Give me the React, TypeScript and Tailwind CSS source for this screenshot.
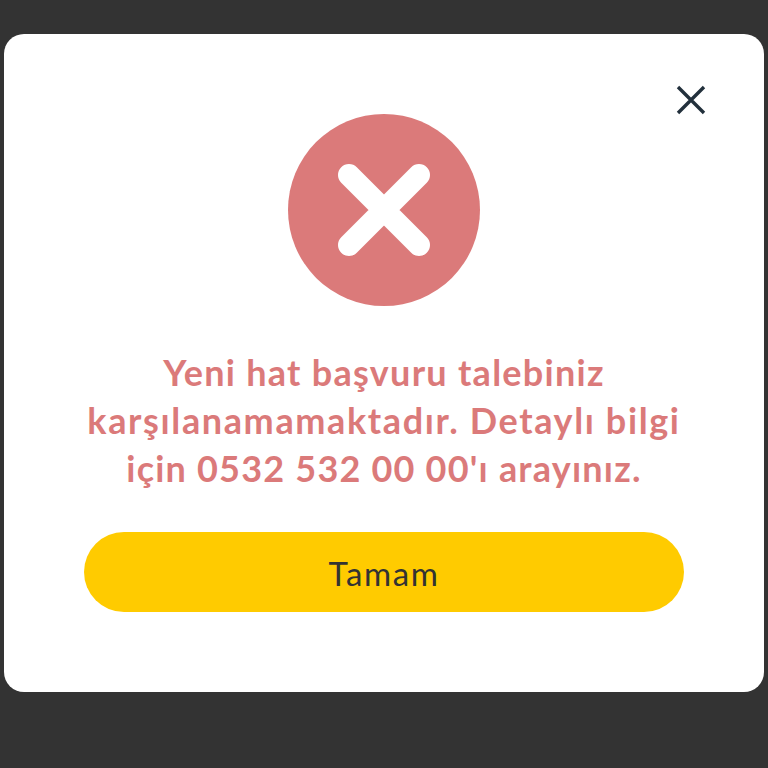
import React from 'react';

const App = () => {
  return (
    <div className="h-[768px] w-[768px] bg-[#333333] px-1 pt-[34px] font-['Lato',sans-serif]">
      <div className="relative flex h-[658px] w-[760px] flex-col items-center rounded-[20px] bg-white px-[80px] pt-[80px]">
        {/* Close */}
        <button className="absolute right-[58px] top-[51px] h-[30px] w-[30px]">
          <svg viewBox="0 0 30 30" className="h-[30px] w-[30px]" fill="none" stroke="#22303c" strokeWidth="3.4">
            <path d="M2 2 L28 28 M28 2 L2 28" />
          </svg>
        </button>

        {/* Error icon */}
        <div className="flex h-[192px] w-[192px] items-center justify-center rounded-full bg-[#db7a7a]">
          <svg viewBox="0 0 92 92" className="h-[92px] w-[92px]" fill="none" stroke="#ffffff" strokeWidth="22" strokeLinecap="round">
            <path d="M11 11 L81 81 M81 11 L11 81" />
          </svg>
        </div>

        <p className="mt-[42px] w-[640px] text-center text-[36px] font-bold leading-[48px] text-[#db7a7a]">
          <span className="block tracking-[1.27px]">Yeni hat başvuru talebiniz</span>
          <span className="block tracking-[1.62px]">karşılanamamaktadır. Detaylı bilgi</span>
          <span className="block tracking-[1.2px]">için 0532 532 00 00'ı arayınız.</span>
        </p>

        <button className="mt-[40px] flex h-[80px] w-[600px] items-center justify-center rounded-full bg-[#ffcb00] pt-1 text-[33px] tracking-[1.6px] text-[#333333]">
          Tamam
        </button>
      </div>
    </div>
  );
};

export default App;
